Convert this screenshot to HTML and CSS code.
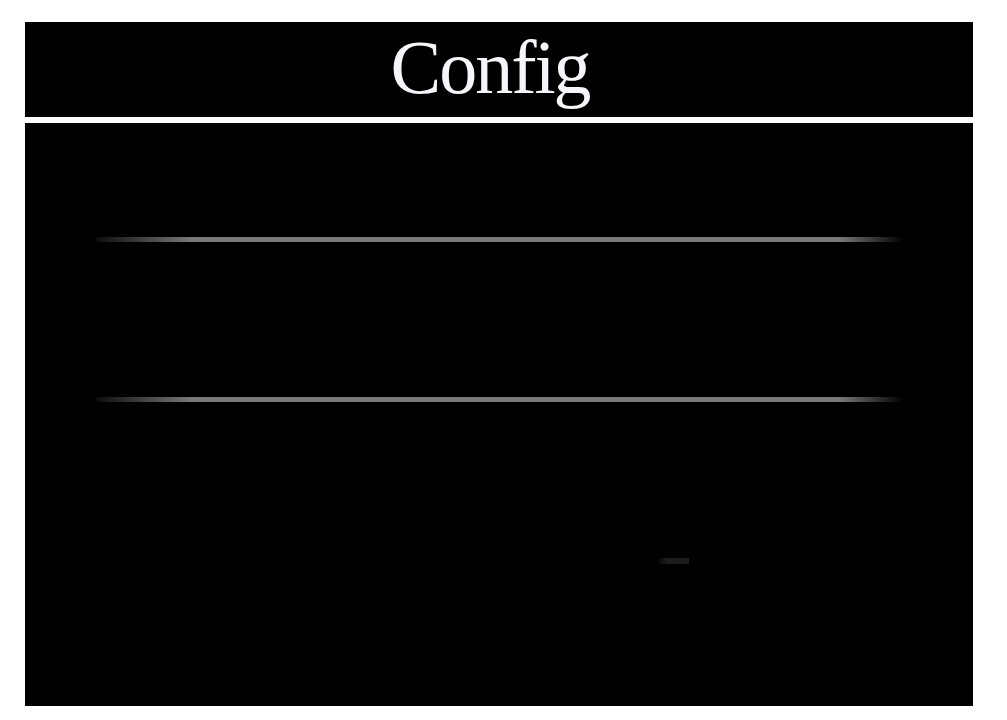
FILE: index.html
```html
<!DOCTYPE html>
<html>
<head>
<meta charset="utf-8">
<title>Config</title>
<link rel="stylesheet" href="styles.css">
</head>
<body>
<div class="panel">
  <header class="head"><h1 class="title">Config</h1></header>
  <main class="content">
    <div class="divider"></div>
    <div class="divider second"></div>
    <div class="row"><span class="knob"></span></div>
  </main>
</div>
</body>
</html>
```
FILE: styles.css
```css
html, body { margin: 0; padding: 0; background: #fff; }
body { padding: 22px 34px 14px 25px; }
.panel { width: 948px; display: flex; flex-direction: column; gap: 6px; }
.head { background: #000; height: 95px; display: flex; justify-content: center; align-items: flex-start; padding-right: 18px; }
.title { margin: 0; padding-top: 2px; font-family: "Liberation Serif", "DejaVu Serif", serif; font-weight: 400; font-size: 76px; line-height: 86px; color: #f4f6fa; letter-spacing: -2px; }
.content { background: #000; height: 583px; padding: 0 70px 0 71px; display: flex; flex-direction: column; }
.divider { height: 5px; border-radius: 3px; margin-top: 114px; background: linear-gradient(to right, rgba(120,120,120,0.1) 0%, #7a7a7a 12%, #7a7a7a 92%, rgba(120,120,120,0) 100%); }
.divider.second { margin-top: 155px; }
.row { margin-top: 156px; padding-left: 563px; display: flex; }
.knob { width: 30px; height: 6px; background: linear-gradient(to right, #0a0a0a, #1c1c1c 30%, #1c1c1c); }
```
